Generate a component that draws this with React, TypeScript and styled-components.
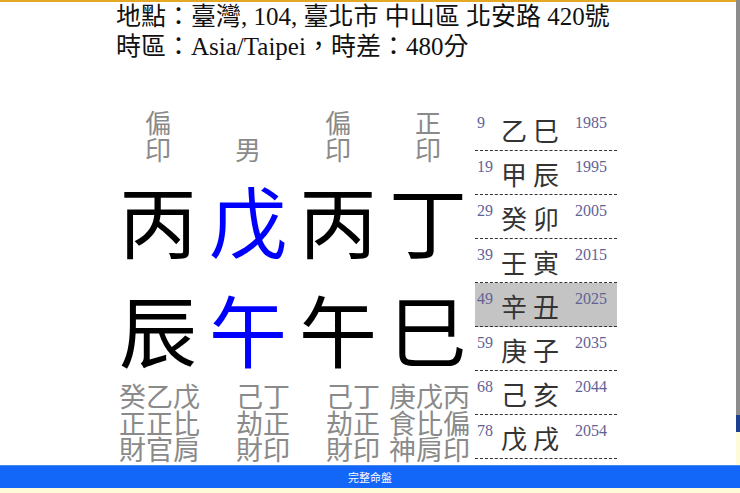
import React from "react";
import styled, { createGlobalStyle } from "styled-components";

const Global = createGlobalStyle`
  html, body { margin: 0; padding: 0; background: #fff; }
  body { width: 740px; height: 493px; overflow: hidden; font-family: "Liberation Serif", "Noto Sans CJK TC", serif; }
`;

const Page = styled.div`
  width: 740px;
  height: 493px;
  display: flex;
  flex-direction: column;
`;

const TopArea = styled.div`
  height: 465px;
  display: flex;
`;

const Main = styled.div`
  flex: 1;
  border-top: 2px solid #e3a824;
  display: flex;
  flex-direction: column;
`;

const Strip = styled.div`
  width: 4px;
  display: flex;
  flex-direction: column;
`;

const StripPart = styled.div<{ $c: string; $h?: number }>`
  background: ${(p) => p.$c};
  ${(p) => (p.$h ? `height: ${p.$h}px;` : "flex: 1;")}
`;

const Header = styled.div`
  padding-left: 116px;
  font-size: 25px;
  line-height: 30px;
  color: #111;
  font-family: "Liberation Serif", "Noto Sans CJK TC", serif;
`;

const Body = styled.div`
  margin-top: 43px;
  display: flex;
  padding-left: 113px;
  gap: 2px;
`;

const Chart = styled.div`
  width: 360px;
  display: flex;
  flex-direction: column;
  font-family: "Noto Sans CJK TC", sans-serif;
`;

const Row = styled.div`
  display: grid;
  grid-template-columns: repeat(4, 90px);
`;

const Label = styled.div`
  height: 60px;
  box-sizing: border-box;
  padding-bottom: 3px;
  display: flex;
  align-items: flex-end;
  justify-content: center;
`;

const LabelText = styled.div`
  width: 28px;
  font-size: 26px;
  line-height: 27px;
  color: #8a8a8a;
  text-align: center;
`;

const Big = styled.div<{ $blue?: boolean }>`
  height: 109px;
  font-size: 78px;
  line-height: 109px;
  text-align: center;
  color: ${(p) => (p.$blue ? "#0000ff" : "#000")};
`;

const Hidden = styled.div`
  text-align: right;
  padding-right: 3px;
  font-size: 27px;
  line-height: 26.5px;
  color: #8a8a8a;
  white-space: pre;
`;

const Luck = styled.div`
  width: 142px;
  margin-top: 2px;
  display: flex;
  flex-direction: column;
`;

const LuckRow = styled.div<{ $on?: boolean }>`
  height: 43px;
  border-bottom: 1px dashed #333;
  background: ${(p) => (p.$on ? "#c4c4c4" : "transparent")};
  display: flex;
  align-items: flex-start;
`;

const Small = styled.div<{ $w?: number }>`
  ${(p) => (p.$w ? `width: ${p.$w}px;` : "")}
  font-family: "Liberation Serif", serif;
  font-size: 16px;
  line-height: 16px;
  color: #626295;
  padding-top: 8px;
  padding-left: 2px;
`;

const Stems = styled.div`
  width: 72px;
  font-family: "Noto Sans CJK TC", sans-serif;
  font-size: 26px;
  line-height: 26px;
  letter-spacing: 6px;
  color: #333;
  padding-top: 10px;
`;

const Bar = styled.div`
  height: 23px;
  background: #1266f8;
  border-top: 1px solid #4a8af0;
  box-sizing: border-box;
  display: flex;
  align-items: center;
  justify-content: center;
  color: #fff;
  font-family: "Noto Sans CJK TC", sans-serif;
  font-size: 11px;
`;

const Foot = styled.div`
  flex: 1;
  background: #fdfbd8;
`;

const labels = ["偏印", "男", "偏印", "正印"];
const stems = [
  { c: "丙", b: false },
  { c: "戊", b: true },
  { c: "丙", b: false },
  { c: "丁", b: false },
];
const branches = [
  { c: "辰", b: false },
  { c: "午", b: true },
  { c: "午", b: false },
  { c: "巳", b: false },
];
const hidden = [
  "癸乙戊\n正正比\n財官肩",
  "己丁\n劫正\n財印",
  "己丁\n劫正\n財印",
  "庚戊丙\n食比偏\n神肩印",
];
const luck = [
  ["9", "乙巳", "1985"],
  ["19", "甲辰", "1995"],
  ["29", "癸卯", "2005"],
  ["39", "壬寅", "2015"],
  ["49", "辛丑", "2025"],
  ["59", "庚子", "2035"],
  ["68", "己亥", "2044"],
  ["78", "戊戌", "2054"],
];

export default function App() {
  return (
    <Page>
      <Global />
      <TopArea>
        <Main>
          <Header>
            <div>地點：臺灣, 104, 臺北市 中山區 北安路 420號</div>
            <div>時區：Asia/Taipei，時差：480分</div>
          </Header>
          <Body>
            <Chart>
              <Row>
                {labels.map((l, i) => (
                  <Label key={i}>
                    <LabelText>{l}</LabelText>
                  </Label>
                ))}
              </Row>
              <Row>
                {stems.map((s, i) => (
                  <Big key={i} $blue={s.b}>{s.c}</Big>
                ))}
              </Row>
              <Row>
                {branches.map((s, i) => (
                  <Big key={i} $blue={s.b}>{s.c}</Big>
                ))}
              </Row>
              <Row>
                {hidden.map((h, i) => (
                  <Hidden key={i}>{h}</Hidden>
                ))}
              </Row>
            </Chart>
            <Luck>
              {luck.map(([a, s, y], i) => (
                <LuckRow key={i} $on={y === "2025"}>
                  <Small $w={24}>{a}</Small>
                  <Stems>{s}</Stems>
                  <Small>{y}</Small>
                </LuckRow>
              ))}
            </Luck>
          </Body>
        </Main>
        <Strip>
          <StripPart $c="#8c8c8c" />
          <StripPart $c="#1d3f8f" $h={17} />
          <StripPart $c="#fdfbd8" $h={33} />
        </Strip>
      </TopArea>
      <Bar>完整命盤</Bar>
      <Foot />
    </Page>
  );
}
